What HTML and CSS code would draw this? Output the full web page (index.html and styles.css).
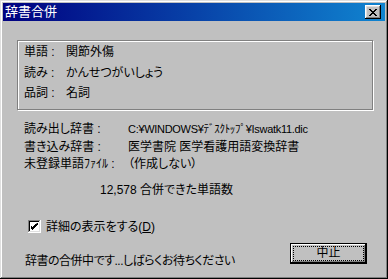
FILE: index.html
```html
<!DOCTYPE html>
<html lang="ja">
<head>
  <meta charset="UTF-8" />
  <title>辞書合併</title>
  <link rel="stylesheet" href="styles.css">
</head>
<body>
  <div class="window">
    <div class="title-bar">
      <span class="title-text">辞書合併</span>
      <button class="close-btn" aria-label="閉じる">
        <svg width="8" height="7" viewBox="0 0 8 7"><path d="M0 0h2v1h1v1h2v-1h1v-1h2v1h-1v1h-1v1h-1v1h1v1h1v1h1v1h-2v-1h-1v-1h-2v1h-1v1h-2v-1h1v-1h1v-1h1v-1h-1v-1h-1v-1h-1z" fill="#000"/></svg>
      </button>
    </div>

    <div class="body">
      <div class="group">
        <div class="row"><span class="lbl">単語 :</span><span>関節外傷</span></div>
        <div class="row"><span class="lbl">読み :</span><span>かんせつがいしょう</span></div>
        <div class="row"><span class="lbl">品詞 :</span><span>名詞</span></div>
      </div>

      <div class="info">
        <div class="info-row"><span class="info-lbl">読み出し辞書 :</span><span class="path">C:¥WINDOWS¥ﾃﾞｽｸﾄｯﾌﾟ¥Iswatk11.dic</span></div>
        <div class="info-row"><span class="info-lbl">書き込み辞書 :</span><span>医学書院 医学看護用語変換辞書</span></div>
        <div class="info-row"><span class="info-lbl">未登録単語ﾌｧｲﾙ :</span><span>（作成しない）</span></div>
      </div>

      <div class="count">12,578 合併できた単語数</div>

      <label class="check">
        <span class="box">
          <svg width="7" height="7" viewBox="0 0 7 7"><path d="M6 0h1v2h-1v1h-1v1h-1v1h-1v1h-1v1h-1v-1h-1v-1h-1v-3h1v1h1v1h1v-1h1v-1h1v-1h1z" fill="#000"/></svg>
        </span>
        <span>詳細の表示をする(<u>D</u>)</span>
      </label>

      <div class="footer">
        <span class="status">辞書の合併中です...しばらくお待ちください</span>
        <button class="btn default"><span class="focus">中止</span></button>
      </div>
    </div>
  </div>
</body>
</html>
```

FILE: styles.css
```css
* { box-sizing: border-box; }
body {
  margin: 0;
  width: 388px;
  height: 279px;
  overflow: hidden;
  background: #c0c0c0;
  font-family: "Liberation Sans", "Noto Sans CJK JP", sans-serif;
  font-size: 12px;
  font-feature-settings: "palt";
  color: #000;
}
.window {
  width: 388px;
  height: 279px;
  padding: 3px;
  background: #c0c0c0;
  box-shadow: inset -1px -1px #000, inset 1px 1px #dfdfdf, inset -2px -2px #808080, inset 2px 2px #fff;
}
.title-bar {
  height: 18px;
  display: flex;
  align-items: center;
  justify-content: space-between;
  padding: 0 4px 0 2px;
  background: linear-gradient(90deg, #000080, #1084d0);
}
.title-text { color: #fff; font-size: 13px; line-height: 18px; }
.close-btn {
  width: 16px;
  height: 14px;
  padding: 0;
  border: none;
  background: #c0c0c0;
  display: flex;
  align-items: center;
  justify-content: center;
  box-shadow: inset -1px -1px #000, inset 1px 1px #fff, inset -2px -2px #808080, inset 2px 2px #dfdfdf;
}
.body { padding: 19px 12px 0 14px; }
.group {
  height: 70px;
  padding: 1px 0 0 6px;
  border: 1px solid #808080;
  box-shadow: 1px 1px 0 #fff, inset 1px 1px 0 #fff;
}
.row { display: flex; line-height: 20.5px; }
.lbl { width: 42px; }
.info { margin-top: 11px; padding-left: 7px; }
.info-row { display: flex; line-height: 17.5px; }
.info-lbl { width: 104px; }
.path { font-size: 11px; letter-spacing: -0.3px; }
.count { margin-top: 7px; padding-left: 83px; line-height: 18px; }
.check {
  display: flex;
  align-items: center;
  gap: 5px;
  margin-top: 19px;
  padding-left: 11px;
  line-height: 18px;
}
.box {
  width: 13px;
  height: 13px;
  background: #fff;
  display: flex;
  align-items: center;
  justify-content: center;
  box-shadow: inset -1px -1px #fff, inset 1px 1px #808080, inset -2px -2px #dfdfdf, inset 2px 2px #000;
}
.footer {
  display: flex;
  justify-content: space-between;
  align-items: flex-start;
  margin-top: 5px;
  padding-left: 8px;
}
.status { margin-top: 11px; line-height: 18px; letter-spacing: -0.5px; }
.btn {
  width: 77px;
  height: 21px;
  padding: 3px;
  border: none;
  background: #c0c0c0;
  font: inherit;
  margin-top: 2px;
  margin-right: 6px;
  box-shadow: inset -1px -1px #000, inset 1px 1px #000, inset -2px -2px #000, inset 2px 2px #fff, inset -3px -3px #808080;
}
.focus {
  display: block;
  height: 100%;
  border: 1px dotted #000;
  line-height: 13px;
  text-align: center;
}
```
